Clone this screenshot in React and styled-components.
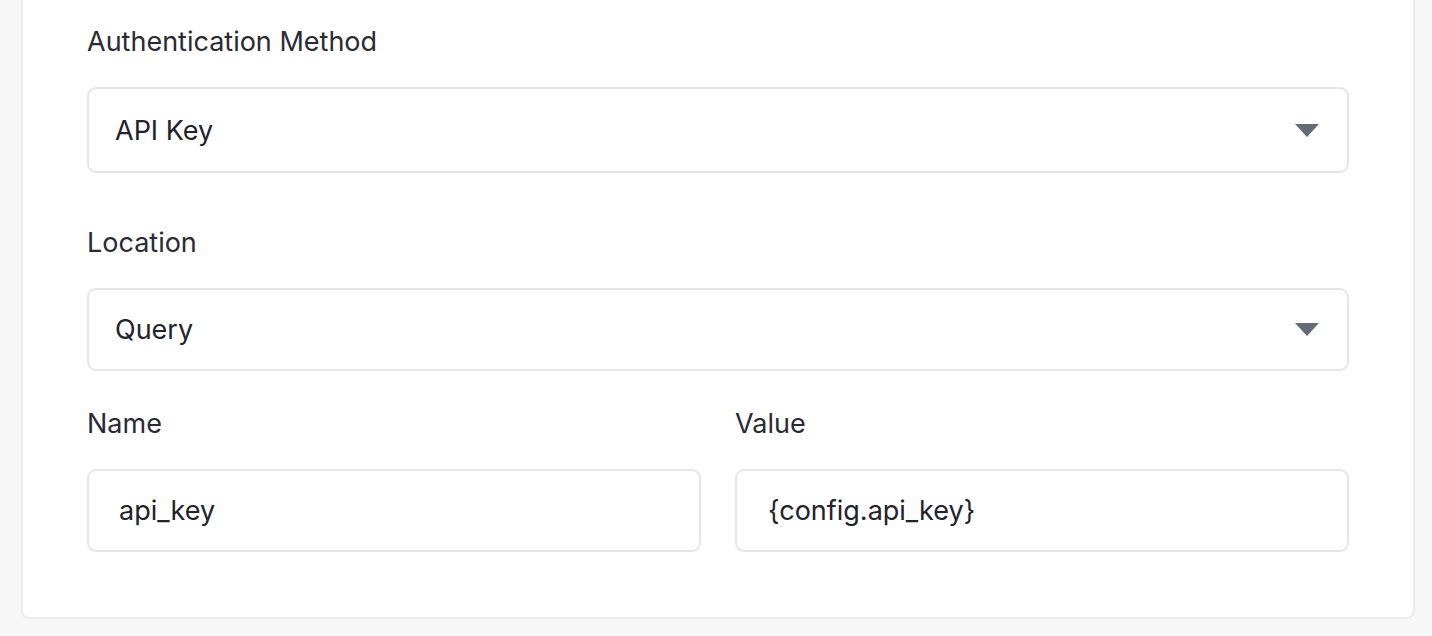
import React from "react";
import styled, { createGlobalStyle } from "styled-components";

const Global = createGlobalStyle`
  html, body { margin: 0; padding: 0; background: #f7f7f7; }
  body { font-family: Inter, "Noto Sans", sans-serif; color: #22222c; }
  * { box-sizing: border-box; }
`;

const Page = styled.div`
  width: 1432px;
  height: 636px;
  padding: 0 17px 0 21px;
  overflow: hidden;
`;

const Card = styled.div`
  background: #fff;
  border: 2px solid #ebebeb;
  border-top: none;
  border-radius: 0 0 8px 8px;
  padding: 24px 64px 65px 64px;
  display: flex;
  flex-direction: column;
`;

const Field = styled.div`
  display: flex;
  flex-direction: column;
  gap: 27px;
  margin-bottom: ${(p) => p.$mb || 0}px;
`;

const Label = styled.label`
  font-size: 27px;
  line-height: 36px;
  color: #2a2a35;
`;

const Box = styled.div`
  height: ${(p) => p.$h || 83}px;
  border: 2px solid #e6e6e6;
  border-radius: 9px;
  background: #fff;
  display: flex;
  align-items: center;
  padding: 0 28px 0 ${(p) => p.$pl || 26}px;
  font-size: 27px;
  color: #22222c;
`;

const Value = styled.span`
  flex: 1;
`;

const Row = styled.div`
  display: grid;
  grid-template-columns: 1fr 1fr;
  gap: 34px;
`;

const Arrow = () => (
  <svg width="24" height="13" viewBox="0 0 24 13">
    <path d="M0 0 L24 0 L12 13 Z" fill="#646b78" />
  </svg>
);

export default function App() {
  return (
    <>
      <Global />
      <Page>
        <Card>
          <Field $mb={52}>
            <Label>Authentication Method</Label>
            <Box $h={86}>
              <Value>API Key</Value>
              <Arrow />
            </Box>
          </Field>
          <Field $mb={35}>
            <Label>Location</Label>
            <Box $h={83}>
              <Value>Query</Value>
              <Arrow />
            </Box>
          </Field>
          <Row>
            <Field>
              <Label>Name</Label>
              <Box $pl={30}>
                <Value>api_key</Value>
              </Box>
            </Field>
            <Field>
              <Label>Value</Label>
              <Box $pl={31}>
                <Value>{"{config.api_key}"}</Value>
              </Box>
            </Field>
          </Row>
        </Card>
      </Page>
    </>
  );
}
